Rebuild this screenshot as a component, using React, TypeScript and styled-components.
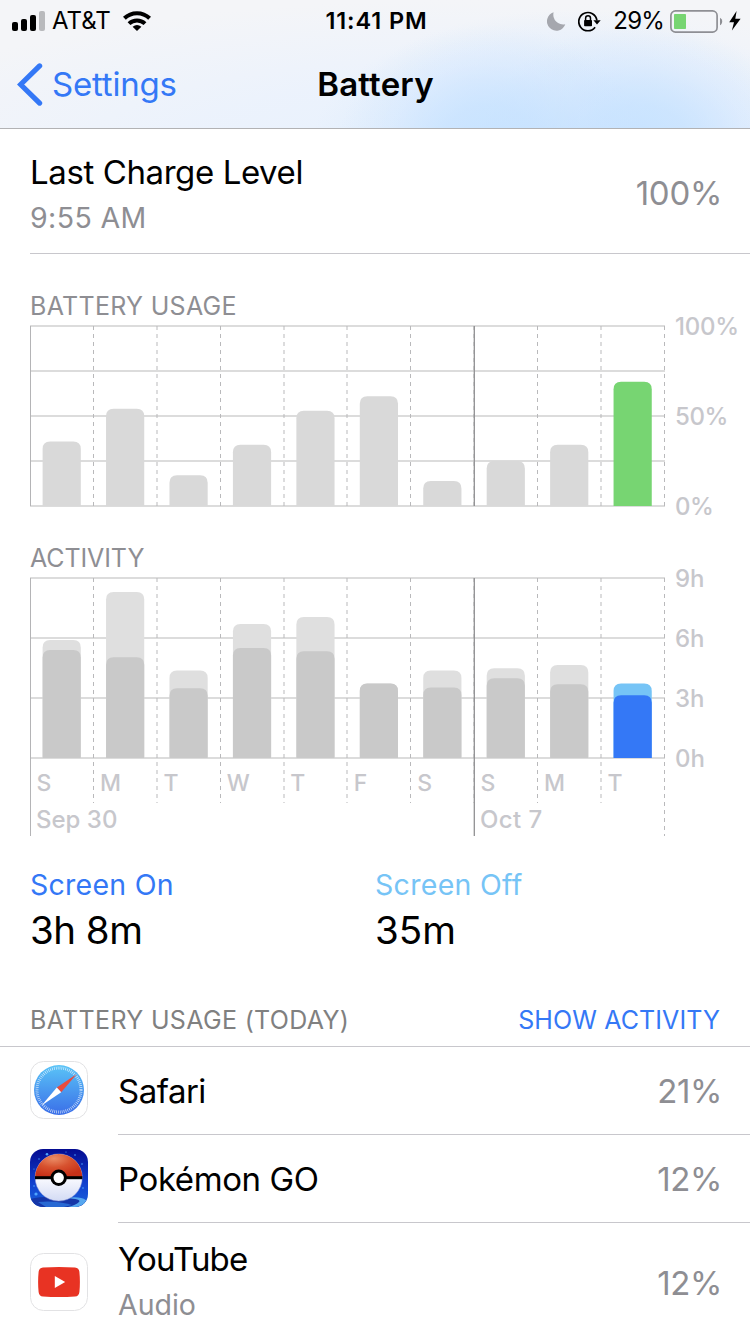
import React from "react";
import styled, { createGlobalStyle } from "styled-components";

const BLUE = "#3478f6";
const SKY = "#76c4f6";
const GRAY = "#8e8e93";
const FAINT = "#c7c7cc";
const HAIR = "#c8c7cc";
const FONT = 'Inter, "Liberation Sans", sans-serif';

const GlobalStyle = createGlobalStyle`
  * { box-sizing: border-box; }
  html, body { margin: 0; padding: 0; background: #fff; }
  body { font-family: ${FONT}; color: #000; overflow: hidden; }
`;

const Screen = styled.main`
  width: 750px;
  height: 1334px;
  overflow: hidden;
  background: #fff;
  display: flex;
  flex-direction: column;
`;

const Header = styled.header`
  flex: none;
  height: 129px;
  border-bottom: 1px solid #b2b2b4;
  background:
    radial-gradient(ellipse 150px 115px at 490px 140px, rgba(197, 226, 255, 0.8) 0%, rgba(198, 226, 255, 0.7) 30%, rgba(205, 228, 255, 0.32) 65%, rgba(225, 236, 255, 0) 100%),
    radial-gradient(ellipse 160px 115px at 640px 140px, rgba(197, 226, 255, 0.8) 0%, rgba(198, 226, 255, 0.7) 30%, rgba(205, 228, 255, 0.32) 65%, rgba(225, 236, 255, 0) 100%),
    radial-gradient(ellipse 260px 140px at 570px 150px, rgba(198, 226, 255, 0.8) 0%, rgba(208, 230, 255, 0.4) 60%, rgba(225, 236, 255, 0) 100%),
    radial-gradient(ellipse 620px 150px at 460px 150px, rgba(230, 241, 254, 0.9) 0%, rgba(232, 241, 254, 0.7) 45%, rgba(240, 245, 252, 0) 100%),
    #f4f5f8;
`;

const StatusBar = styled.div`
  height: 40px;
  display: grid;
  grid-template-columns: 1fr auto 1fr;
  align-items: center;
  padding: 0 9px 0 12px;
`;

const StatusGroup = styled.div<{ $end?: boolean }>`
  display: flex;
  align-items: center;
  height: 40px;
  justify-content: ${(p) => (p.$end ? "flex-end" : "flex-start")};
`;

const NavBar = styled.div`
  height: 88px;
  display: grid;
  grid-template-columns: 1fr auto 1fr;
  align-items: center;
  padding: 0 16px 0 17px;
`;

const BackButton = styled.button`
  border: 0;
  background: none;
  padding: 0;
  display: flex;
  align-items: center;
  gap: 9px;
  color: ${BLUE};
  font-family: inherit;
`;

const Text = styled.span<{
  $size: number;
  $track?: number;
  $weight?: number;
  $color?: string;
  $line?: number;
}>`
  display: block;
  white-space: nowrap;
  font-size: ${(p) => p.$size}px;
  letter-spacing: ${(p) => p.$track ?? 0}px;
  font-weight: ${(p) => p.$weight ?? 400};
  color: ${(p) => p.$color ?? "inherit"};
  line-height: ${(p) => p.$line ?? 40}px;
`;

const ChargeRow = styled.section`
  margin-left: 30px;
  padding: 4px 28px 0 0;
  height: 125px;
  flex: none;
  border-bottom: 1px solid ${HAIR};
  display: flex;
  justify-content: space-between;
  align-items: center;
`;

const Stack = styled.div`
  display: flex;
  flex-direction: column;
`;

const ChargeText = styled(Stack)`
  padding-top: 4px;
`;

const ChartSection = styled.section<{ $top: number }>`
  flex: none;
  margin: ${(p) => p.$top}px 0 0 30px;
`;

const ChartSvg = styled.svg`
  display: block;
  overflow: visible;
  font-family: ${FONT};
  font-size: 24px;
  font-weight: 500;
`;

const Totals = styled.section`
  flex: none;
  display: grid;
  grid-template-columns: 345px 1fr;
  margin: 29px 0 0 30px;
`;

const ListHeader = styled.div`
  flex: none;
  height: 92px;
  padding: 45px 30px 0;
  border-bottom: 1px solid ${HAIR};
  display: flex;
  justify-content: space-between;
`;

const AppRow = styled.div<{ $height: number }>`
  flex: none;
  height: ${(p) => p.$height}px;
  padding-left: 30px;
  display: flex;
  align-items: center;
  gap: 30px;
`;

const AppBody = styled.div<{ $last?: boolean }>`
  flex: 1;
  height: 100%;
  padding-right: 28px;
  display: flex;
  align-items: center;
  justify-content: space-between;
  border-bottom: ${(p) => (p.$last ? "0" : `1px solid ${HAIR}`)};
`;

const AppText = styled(Stack)`
  padding-bottom: 2px;
`;

const Gap = styled.i<{ $w: number }>`
  flex: none;
  width: ${(p) => p.$w}px;
`;

const AppIcon = styled.svg`
  flex: none;
  display: block;
  width: 58px;
  height: 58px;
  margin-bottom: 2px;
`;

const Signal = () => (
  <svg width="33" height="20" viewBox="0 0 33 20">
    <rect x="0" y="11" width="6" height="9" rx="2" />
    <rect x="9" y="8" width="6" height="12" rx="2" />
    <rect x="18" y="4" width="6" height="16" rx="2" />
    <rect x="27" y="0" width="6" height="20" rx="2" fill="#b9babd" />
  </svg>
);

const Wifi = () => (
  <svg width="28" height="20" viewBox="0 0 28 20">
    <g fill="none" stroke="#000" strokeWidth="4">
      <path d="M1.4 7.3 A18 18 0 0 1 26.6 7.3" />
      <path d="M6 12.6 A11.6 11.6 0 0 1 22 12.6" />
    </g>
    <path d="M14 20 L9.6 15.7 A7 7 0 0 1 18.4 15.7 Z" />
  </svg>
);

const Moon = () => (
  <svg width="19" height="19" viewBox="0 0 19 19">
    <path d="M6.6 0.3 A9.4 9.4 0 1 0 18.3 12.2 A9.8 9.8 0 0 1 6.6 0.3 Z" fill="#a5a7ae" />
  </svg>
);

const RotationLock = () => (
  <svg width="23" height="21" viewBox="0 0 23 21">
    <path d="M17.1 16.2 A9.1 9.1 0 1 1 18.9 9.4" fill="none" stroke="#000" strokeWidth="1.7" />
    <path d="M15.4 9.2 H22.7 L19 13.4 Z" />
    <rect x="6.1" y="9" width="7.9" height="6.2" rx="0.8" />
    <path d="M7.6 9.5 V7.2 A2.45 2.45 0 0 1 12.5 7.2 V9.5" fill="none" stroke="#000" strokeWidth="1.5" />
  </svg>
);

const BatteryGlyph = () => (
  <svg width="53" height="23" viewBox="0 0 53 23">
    <rect x="0.9" y="0.9" width="46.2" height="21.2" rx="4.6" fill="none" stroke="#8e8f94" strokeWidth="1.7" />
    <rect x="4" y="4" width="12" height="15" rx="0.8" fill="#77d572" />
    <path d="M50 7.7 A4.4 4.4 0 0 1 50 15.3 Z" fill="#8e8f94" />
  </svg>
);

const Bolt = () => (
  <svg width="12" height="20" viewBox="0 0 12 20">
    <path d="M7.6 0 L0.2 11.3 H5 L2.9 19.6 L11.6 7.8 H6.3 Z" />
  </svg>
);

const Chevron = () => (
  <svg width="26" height="43" viewBox="0 0 26 43">
    <path d="M22.6 2.9 L3.6 21.5 L22.6 40.1" fill="none" stroke={BLUE} strokeWidth="5.2" strokeLinecap="round" strokeLinejoin="miter" />
  </svg>
);

const PITCH = 63.44;

// Column edge snapped to the half pixel so that the dashes stay thin.
const edge = (i: number) => {
  if (i === 0) return 0.5;
  if (i === 10) return 634.5;
  return Math.round(i * PITCH * 2) / 2;
};

function barPath(i: number, top: number, bottom: number) {
  const x = 12.6 + i * PITCH;
  const w = 38.2;
  const r = 7.5;
  return `M${x} ${bottom} V${top + r} Q${x} ${top} ${x + r} ${top} H${x + w - r} Q${x + w} ${top} ${x + w} ${top + r} V${bottom} Z`;
}

const HLines = ({ ys }: { ys: number[] }) => (
  <g fill="#dcdcdc">
    {ys.map((y) => (
      <rect key={y} x="0" y={y - 1} width="635" height="2" />
    ))}
  </g>
);

const VLines = ({ height, outer }: { height: number; outer: number }) => (
  <g>
    {Array.from({ length: 11 }, (_, i) => {
      const h = i === 0 || i === 10 ? outer : height;
      return (
        <line key={i} x1={edge(i)} x2={edge(i)} y1="1" y2={h} stroke="#b9b9bb" strokeWidth="1" strokeDasharray="4 4" />
      );
    })}
    <line x1="0.5" x2="0.5" y1="1" y2={outer} stroke="#b4b4b6" strokeWidth="1" />
    <line x1="444.3" x2="444.3" y1="1" y2={outer} stroke="#909092" strokeWidth="1.3" />
  </g>
);

const USAGE = [116.4, 83.7, 150.3, 119.8, 85.7, 71.3, 156, 136, 119.8, 56.8];

const UsageChart = () => (
  <ChartSvg width="720" height="182" viewBox="0 0 720 182">
    <HLines ys={[1, 46, 91, 136, 181]} />
    <VLines height={181} outer={181} />
    {USAGE.map((top, i) => (
      <path key={i} d={barPath(i, top, 181)} fill={i === 9 ? "#77d572" : "#d9d9d9"} />
    ))}
    <g fill={FAINT} letterSpacing="-0.4">
      <text x="645" y="10" letterSpacing="-0.2">100%</text>
      <text x="645" y="100">50%</text>
      <text x="645" y="190">0%</text>
    </g>
  </ChartSvg>
);

const ACTIVITY: [number, number][] = [
  [63, 73], [15, 80.3], [93.5, 111.3], [47, 71], [40, 74.3],
  [106.6, 106.6], [93.5, 110.6], [91.3, 101.3], [88, 107.3], [106.6, 118.3],
];
const DAYS = ["S", "M", "T", "W", "T", "F", "S", "S", "M", "T"];

const ActivityChart = () => (
  <ChartSvg width="720" height="259" viewBox="0 0 720 259">
    <HLines ys={[1, 61, 121, 181]} />
    <VLines height={226} outer={259} />
    {ACTIVITY.map(([off, on], i) => (
      <g key={i}>
        <path d={barPath(i, off, 181)} fill={i === 9 ? SKY : "#dfdfdf"} />
        <path d={barPath(i, on, 181)} fill={i === 9 ? BLUE : "#c9c9c9"} />
      </g>
    ))}
    <g fill={FAINT}>
      {["9h", "6h", "3h", "0h"].map((t, i) => (
        <text key={t} x="645" y={10 + i * 60}>{t}</text>
      ))}
      {DAYS.map((d, i) => (
        <text key={i} x={6.5 + i * PITCH} y="214" fontSize="23">{d}</text>
      ))}
      <text x="6" y="251">Sep 30</text>
      <text x="450" y="251" letterSpacing="0.4">Oct 7</text>
    </g>
  </ChartSvg>
);

const SafariIcon = () => (
  <AppIcon viewBox="0 0 58 58">
    <defs>
      <linearGradient id="safari" x1="0" y1="0" x2="0" y2="1">
        <stop offset="0" stopColor="#5ac4f7" />
        <stop offset="1" stopColor="#3a6ee8" />
      </linearGradient>
    </defs>
    <rect x="0.5" y="0.5" width="57" height="57" rx="13" fill="#fff" stroke="#e2e2e4" />
    <circle cx="29" cy="29" r="25" fill="url(#safari)" />
    <circle cx="29" cy="29" r="22" fill="none" stroke="#fff" strokeOpacity="0.75" strokeWidth="3" strokeDasharray="0.7 1.22" />
    <path d="M46.8 13 L26.8 26.6 L31.2 31.2 Z" fill="#ea4b3d" />
    <path d="M11.6 44.6 L26.8 26.6 L31.2 31.2 Z" fill="#fff" />
  </AppIcon>
);

const PokemonIcon = () => (
  <AppIcon viewBox="0 0 58 58">
    <defs>
      <linearGradient id="night" x1="0" y1="0" x2="0" y2="1">
        <stop offset="0" stopColor="#040b91" />
        <stop offset="0.6" stopColor="#1141cf" />
        <stop offset="1" stopColor="#1a62db" />
      </linearGradient>
      <radialGradient id="red" cx="0.4" cy="0.2" r="0.75">
        <stop offset="0" stopColor="#ea8c65" />
        <stop offset="0.5" stopColor="#d7522f" />
        <stop offset="1" stopColor="#c83118" />
      </radialGradient>
      <linearGradient id="white" x1="0" y1="0" x2="0" y2="1">
        <stop offset="0.5" stopColor="#fafaff" />
        <stop offset="1" stopColor="#d3dbf4" />
      </linearGradient>
      <clipPath id="tile"><rect width="58" height="58" rx="13" /></clipPath>
    </defs>
    <g clipPath="url(#tile)">
      <rect width="58" height="58" fill="url(#night)" />
      <path d="M0 50 Q20 45 58 51 V58 H0 Z" fill="#1536a8" />
      <path d="M36 49 Q52 50 49 53 Q46 56 38 58 H48 Q58 54 56 51 Q50 47 36 49 Z" fill="#56a7ef" />
      <path d="M8 53 Q26 51 42 56 L34 58 H16 Z" fill="#2869d3" />
      <g fill="#4fa5ff">
        <circle cx="17" cy="5.3" r="1.3" /><circle cx="6" cy="45" r="1.6" /><circle cx="4" cy="37" r="0.8" />
        <circle cx="45" cy="6" r="0.8" /><circle cx="52" cy="15" r="0.8" /><circle cx="9" cy="10" r="0.7" />
        <circle cx="53" cy="39" r="0.8" /><circle cx="36" cy="3" r="0.6" /><circle cx="4" cy="20" r="0.6" />
      </g>
      <circle cx="28.7" cy="28.5" r="23.6" fill="url(#white)" stroke="#8795d8" strokeWidth="0.5" />
      <path d="M5.1 28.5 A23.6 23.6 0 0 1 52.3 28.5 Z" fill="url(#red)" />
      <rect x="5" y="27.2" width="47.4" height="3" fill="#000" />
      <circle cx="28.7" cy="28.8" r="8.2" fill="#000" />
      <circle cx="28.7" cy="28.8" r="5.2" fill="#fff" />
    </g>
  </AppIcon>
);

const YouTubeIcon = () => (
  <AppIcon viewBox="0 0 58 58">
    <rect x="0.5" y="0.5" width="57" height="57" rx="13" fill="#fff" stroke="#e2e2e4" />
    <path d="M13 14.4 Q29 13.4 45 14.4 Q49 14.8 49.4 19 Q50.4 29 49.4 39 Q49 43.2 45 43.6 Q29 44.6 13 43.6 Q9 43.2 8.6 39 Q7.6 29 8.6 19 Q9 14.8 13 14.4 Z" fill="#e83323" />
    <path d="M24.8 23 V35 L35.2 29 Z" fill="#fff" />
  </AppIcon>
);

export default function App() {
  return (
    <Screen>
      <GlobalStyle />
      <Header>
        <StatusBar>
          <StatusGroup>
            <Signal />
            <Gap $w={7} />
            <Text $size={24} $track={0}>AT&amp;T</Text>
            <Gap $w={12} />
            <Wifi />
          </StatusGroup>
          <Text $size={23.5} $weight={600} $track={0.9} $line={42}>11:41 PM</Text>
          <StatusGroup $end>
            <Moon />
            <Gap $w={12} />
            <RotationLock />
            <Gap $w={12} />
            <Text $size={24} $track={-0.8} $line={42}>29%</Text>
            <Gap $w={6} />
            <BatteryGlyph />
            <Gap $w={6} />
            <Bolt />
          </StatusGroup>
        </StatusBar>
        <NavBar>
          <BackButton>
            <Chevron />
            <Text $size={33} $track={-0.2}>Settings</Text>
          </BackButton>
          <Text $size={33} $weight={600} $track={0.2}>Battery</Text>
        </NavBar>
      </Header>

      <ChargeRow>
        <ChargeText>
          <Text $size={33} $track={-0.4} $line={45}>Last Charge Level</Text>
          <Text $size={28.5} $track={0.4} $line={45} $color={GRAY}>9:55 AM</Text>
        </ChargeText>
        <Text $size={33} $track={-0.3} $color={GRAY}>100%</Text>
      </ChargeRow>

      <ChartSection $top={34}>
        <Text $size={25} $track={0.3} $line={37} $color={GRAY}>BATTERY USAGE</Text>
        <UsageChart />
      </ChartSection>
      <ChartSection $top={33}>
        <Text $size={25} $track={-0.1} $line={37} $color={GRAY}>ACTIVITY</Text>
        <ActivityChart />
      </ChartSection>

      <Totals>
        <Stack>
          <Text $size={28.5} $track={0.25} $line={40} $color={BLUE}>Screen On</Text>
          <Text $size={38.5} $track={-0.5} $line={50}>3h 8m</Text>
        </Stack>
        <Stack>
          <Text $size={28.5} $track={0.3} $line={40} $color={SKY}>Screen Off</Text>
          <Text $size={38.5} $line={50}>35m</Text>
        </Stack>
      </Totals>

      <ListHeader>
        <Text $size={25} $track={0.33} $color="#808080">BATTERY USAGE (TODAY)</Text>
        <Text $size={25} $track={0.1} $color={BLUE}>SHOW ACTIVITY</Text>
      </ListHeader>
      <AppRow $height={88}>
        <SafariIcon />
        <AppBody>
          <Text $size={33} $track={-0.5}>Safari</Text>
          <Text $size={33} $track={-0.4} $color={GRAY}>21%</Text>
        </AppBody>
      </AppRow>
      <AppRow $height={88}>
        <PokemonIcon />
        <AppBody>
          <Text $size={33} $track={-0.4}>Pokémon GO</Text>
          <Text $size={33} $track={-0.4} $color={GRAY}>12%</Text>
        </AppBody>
      </AppRow>
      <AppRow $height={120}>
        <YouTubeIcon />
        <AppBody $last>
          <AppText>
            <Text $size={33} $track={-0.85} $line={45}>YouTube</Text>
            <Text $size={28.5} $line={45} $color={GRAY}>Audio</Text>
          </AppText>
          <Text $size={33} $track={-0.4} $color={GRAY}>12%</Text>
        </AppBody>
      </AppRow>
    </Screen>
  );
}
